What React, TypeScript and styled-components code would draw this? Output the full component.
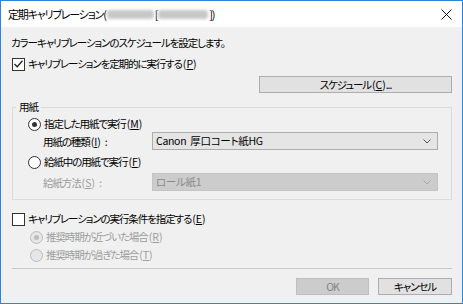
import React from 'react';
import styled, { createGlobalStyle } from 'styled-components';

const GlobalStyle = createGlobalStyle`
  html, body {
    margin: 0;
    padding: 0;
    background: #ffffff;
  }
  body {
    font-family: "Noto Sans CJK JP", "Liberation Sans", sans-serif;
    font-size: 10.5px;
    letter-spacing: -1.1px;
    font-feature-settings: "palt";
    color: #000000;
  }
`;

const Frame = styled.div`
  width: 463px;
  height: 304px;
  box-sizing: border-box;
  border: 1px solid #2a86dc;
  background: #f0f0f0;
  display: flex;
  flex-direction: column;
`;

const TitleBar = styled.div`
  height: 26px;
  flex-shrink: 0;
  background: #ffffff;
  display: flex;
  align-items: center;
  justify-content: space-between;
  padding: 0 7px 0 7px;
  font-size: 11px;
  letter-spacing: -1.2px;
`;

const TitleText = styled.div`
  display: flex;
  align-items: center;
  line-height: 16px;
`;

const Blurred = styled.span<{ $w: number }>`
  display: inline-block;
  width: ${({ $w }) => $w}px;
  height: 9px;
  margin: 0 1px;
  border-radius: 3px;
  background: #c8c8c8;
  filter: blur(1.5px);
`;

const CloseButton = styled.button`
  width: 14px;
  height: 14px;
  padding: 0;
  border: 0;
  background: transparent;
  display: flex;
  align-items: center;
  justify-content: center;
  margin-right: 2px;
`;

const Body = styled.div`
  flex: 1;
  display: flex;
  flex-direction: column;
  padding: 8px 10px 0 10px;
`;

const Line = styled.div<{ $indent?: number; $disabled?: boolean; $top?: number }>`
  height: 16px;
  line-height: 16px;
  display: flex;
  align-items: center;
  white-space: nowrap;
  padding-left: ${({ $indent }) => $indent ?? 0}px;
  margin-top: ${({ $top }) => $top ?? 0}px;
  color: ${({ $disabled }) => ($disabled ? '#9d9d9d' : '#000000')};
`;

const CheckBox = styled.span`
  width: 11px;
  height: 11px;
  border: 1px solid #333333;
  background: #ffffff;
  margin-right: 3px;
  display: flex;
  align-items: center;
  justify-content: center;
  flex-shrink: 0;
`;

const Radio = styled.span<{ $checked?: boolean; $disabled?: boolean }>`
  width: 11px;
  height: 11px;
  border-radius: 50%;
  border: 1px solid ${({ $disabled }) => ($disabled ? '#bcbcbc' : '#333333')};
  background: ${({ $disabled }) => ($disabled ? '#e6e6e6' : '#ffffff')};
  margin-right: 3px;
  display: flex;
  align-items: center;
  justify-content: center;
  flex-shrink: 0;
  &::after {
    content: '';
    display: ${({ $checked }) => ($checked ? 'block' : 'none')};
    width: 5px;
    height: 5px;
    border-radius: 50%;
    background: ${({ $disabled }) => ($disabled ? '#bcbcbc' : '#333333')};
  }
`;

const KeyWrap = styled.span`
  letter-spacing: 0;
  margin-left: 1px;
  & u {
    text-decoration: underline;
  }
`;

const Key = ({ k }: { k: string }) => (
  <KeyWrap>
    (<u>{k}</u>)
  </KeyWrap>
);

const ButtonRow = styled.div<{ $top: number }>`
  display: flex;
  justify-content: flex-end;
  gap: 9px;
  margin-top: ${({ $top }) => $top}px;
`;

const PushButton = styled.button<{ $width: number; $disabled?: boolean }>`
  width: ${({ $width }) => $width}px;
  height: 17px;
  padding: 0;
  font: inherit;
  letter-spacing: inherit;
  font-feature-settings: inherit;
  line-height: 15px;
  border: 1px solid ${({ $disabled }) => ($disabled ? '#bfbfbf' : '#adadad')};
  background: ${({ $disabled }) => ($disabled ? '#cccccc' : '#e1e1e1')};
  color: ${({ $disabled }) => ($disabled ? '#838383' : '#000000')};
`;

const Group = styled.fieldset`
  margin: 6px 0 0 1px;
  padding: 0 13px 8px 0;
  border: 1px solid #dcdcdc;
  min-width: 0;
`;

const Legend = styled.legend`
  margin-left: 3px;
  padding: 0 3px;
  line-height: 16px;
`;

const FieldRow = styled.div<{ $top: number }>`
  display: flex;
  align-items: center;
  height: 18px;
  margin-top: ${({ $top }) => $top}px;
`;

const FieldLabel = styled.span<{ $disabled?: boolean }>`
  width: 139px;
  padding-left: 30px;
  box-sizing: border-box;
  flex-shrink: 0;
  white-space: nowrap;
  color: ${({ $disabled }) => ($disabled ? '#9d9d9d' : '#000000')};
`;

const Colon = styled.span`
  margin-left: 4px;
`;

const Combo = styled.div<{ $disabled?: boolean }>`
  flex: 1;
  height: 18px;
  box-sizing: border-box;
  border: 1px solid ${({ $disabled }) => ($disabled ? '#c4c4c4' : '#acacac')};
  background: ${({ $disabled }) => ($disabled ? '#cccccc' : '#e5e5e5')};
  color: ${({ $disabled }) => ($disabled ? '#8a8a8a' : '#000000')};
  display: flex;
  align-items: center;
  justify-content: space-between;
  padding: 0 6px 0 3px;
  line-height: 16px;
  letter-spacing: -0.3px;
  word-spacing: 2px;
`;

const Separator = styled.div`
  height: 1px;
  background: #c8c8c8;
  margin: 5px 0 0 1px;
`;

const Chevron = ({ color }: { color: string }) => (
  <svg width="8" height="5" viewBox="0 0 8 5">
    <polyline points="0.5,0.5 4,4 7.5,0.5" fill="none" stroke={color} strokeWidth="1" />
  </svg>
);

const Check = () => (
  <svg width="9" height="8" viewBox="0 0 9 8">
    <polyline points="0.5,4 3.2,6.8 8.5,0.8" fill="none" stroke="#222" strokeWidth="1.3" />
  </svg>
);

const App = () => (
  <>
    <GlobalStyle />
    <Frame>
      <TitleBar>
        <TitleText>
          定期キャリブレーション(
          <Blurred $w={47} />
          [
          <Blurred $w={50} />
          ])
        </TitleText>
        <CloseButton aria-label="閉じる">
          <svg width="11" height="11" viewBox="0 0 11 11">
            <path d="M0.5 0.5 L10.5 10.5 M10.5 0.5 L0.5 10.5" stroke="#111" strokeWidth="1" />
          </svg>
        </CloseButton>
      </TitleBar>
      <Body>
        <Line>カラーキャリブレーションのスケジュールを設定します。</Line>
        <Line $top={5} $indent={1}>
          <CheckBox>
            <Check />
          </CheckBox>
          キャリブレーションを定期的に実行する<Key k="P" />
        </Line>
        <ButtonRow $top={4}>
          <PushButton $width={193}>
            スケジュール<Key k="C" />...
          </PushButton>
        </ButtonRow>
        <Group>
          <Legend>用紙</Legend>
          <Line $indent={15} $top={1}>
            <Radio $checked />
            指定した用紙で実行<Key k="M" />
          </Line>
          <FieldRow $top={0}>
            <FieldLabel>
              用紙の種類<Key k="I" />
              <Colon>:</Colon>
            </FieldLabel>
            <Combo>
              <span>Canon 厚口コート紙HG</span>
              <Chevron color="#555555" />
            </Combo>
          </FieldRow>
          <Line $indent={15} $top={4}>
            <Radio />
            給紙中の用紙で実行<Key k="F" />
          </Line>
          <FieldRow $top={3}>
            <FieldLabel $disabled>
              給紙方法<Key k="S" />
              <Colon>:</Colon>
            </FieldLabel>
            <Combo $disabled>
              <span>ロール紙1</span>
              <Chevron color="#a8a8a8" />
            </Combo>
          </FieldRow>
        </Group>
        <Line $top={11} $indent={1}>
          <CheckBox />
          キャリブレーションの実行条件を指定する<Key k="E" />
        </Line>
        <Line $top={2} $indent={19} $disabled>
          <Radio $checked $disabled />
          推奨時期が近づいた場合<Key k="R" />
        </Line>
        <Line $top={2} $indent={19} $disabled>
          <Radio $disabled />
          推奨時期が過ぎた場合<Key k="T" />
        </Line>
        <Separator />
        <ButtonRow $top={9}>
          <PushButton $width={73} $disabled>
            OK
          </PushButton>
          <PushButton $width={74}>キャンセル</PushButton>
        </ButtonRow>
      </Body>
    </Frame>
  </>
);

export default App;
